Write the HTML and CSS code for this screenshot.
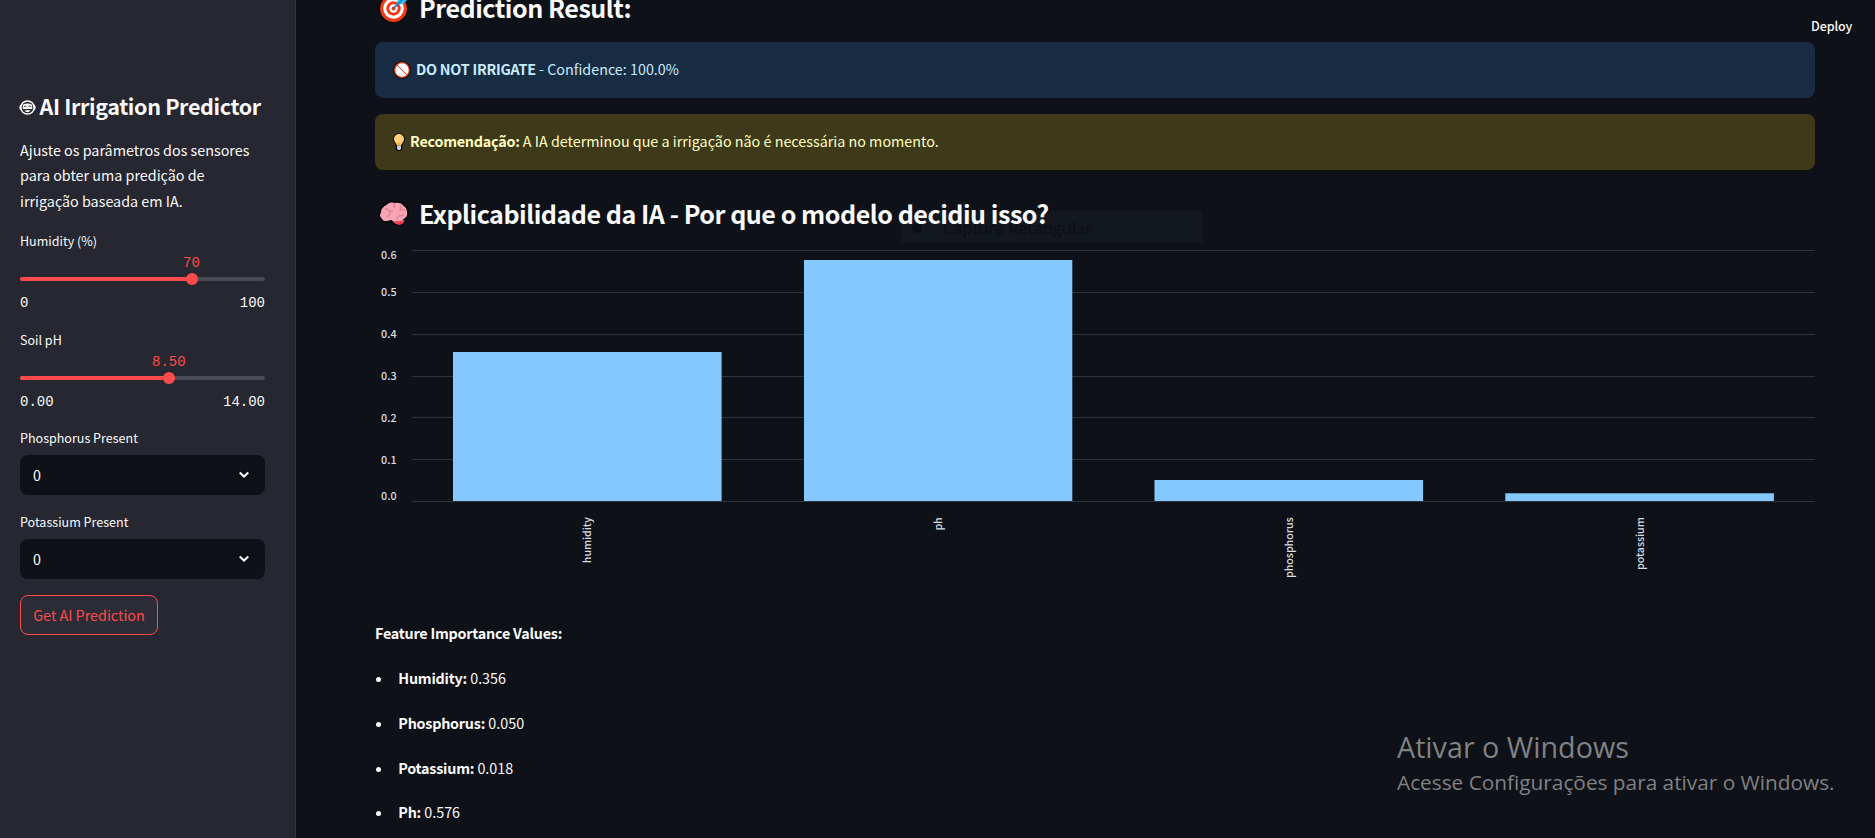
FILE: index.html
```html
<!DOCTYPE html>
<html lang="pt-BR">
<head>
<meta charset="utf-8">
<title>AI Irrigation Predictor</title>
<link rel="stylesheet" href="styles.css">
</head>
<body>
<div class="app">
  <aside class="sidebar">
    <h1 class="side-title">
      <svg class="bot" viewBox="0 0 17 15"><ellipse cx="8.500" cy="7.500" rx="8.200" ry="5" fill="#fff"/><ellipse cx="8.500" cy="7.500" rx="6.600" ry="6.600" fill="#262730" stroke="#fff" stroke-width="1.500"/><path d="M3.800 4.800Q8.500 2 13.200 4.800V9H3.800z" fill="#fff"/><path d="M4.800 7.200l1.400-1.500 1.400 1.500M9.400 7.200l1.400-1.500 1.400 1.500" fill="none" stroke="#333" stroke-width=".9"/><path d="M5.500 10.200h6q-1 2-3 2t-3-2z" fill="#fff"/></svg>
      <span>AI Irrigation Predictor</span>
    </h1>
    <p class="intro">Ajuste os parâmetros dos sensores<br>para obter uma predição de<br>irrigação baseada em IA.</p>

    <div class="slider">
      <div class="label">Humidity (%)</div>
      <div class="value-row"><span class="value" style="margin-left:163px">70</span></div>
      <div class="track"><div class="fill" style="width:171.5px"></div><div class="thumb"></div></div>
      <div class="range"><span>0</span><span>100</span></div>
    </div>
    <div class="slider">
      <div class="label">Soil pH</div>
      <div class="value-row"><span class="value" style="margin-left:132px">8.50</span></div>
      <div class="track"><div class="fill" style="width:148.75px"></div><div class="thumb"></div></div>
      <div class="range"><span>0.00</span><span>14.00</span></div>
    </div>
    <div class="field">
      <div class="label">Phosphorus Present</div>
      <div class="select"><span>0</span><svg class="chev" viewBox="0 0 12 8"><path d="M1.700 1.600L6 5.600l4.300-4" fill="none" stroke="#fafafa" stroke-width="2"/></svg></div>
    </div>
    <div class="field">
      <div class="label">Potassium Present</div>
      <div class="select"><span>0</span><svg class="chev" viewBox="0 0 12 8"><path d="M1.700 1.600L6 5.600l4.300-4" fill="none" stroke="#fafafa" stroke-width="2"/></svg></div>
    </div>
    <button class="predict">Get AI Prediction</button>
  </aside>

  <main class="main">
    <h2 class="heading result">
      <svg class="emoji" viewBox="0 0 32 32"><circle cx="15.500" cy="16.500" r="15" fill="#090a0c"/><circle cx="15.500" cy="16.500" r="13.500" fill="#f03a17"/><circle cx="15.500" cy="16.500" r="10.300" fill="#fff"/><circle cx="15.500" cy="16.500" r="7.200" fill="#f03a17"/><circle cx="15.500" cy="16.500" r="4.200" fill="#fff"/><circle cx="15.500" cy="16.500" r="2" fill="#f03a17"/><path d="M18 13l2-6 5-5 1 4 4 1-5 5z" fill="#28c4f5"/><path d="M15.500 16.500L25 7" stroke="#1675c9" stroke-width="1.500"/></svg>
      <span>Prediction Result:</span>
    </h2>
    <div class="alert info">
      <svg class="ban" viewBox="0 0 18 18"><circle cx="9" cy="9" r="9" fill="#090d12"/><circle cx="9" cy="9" r="7.300" fill="#fff" stroke="#ee4320" stroke-width="1.300"/><path d="M4 4l10 10" stroke="#ee4320" stroke-width="1"/></svg>
      <span class="msg"><b>DO NOT IRRIGATE</b> - Confidence: 100.0%</span>
    </div>
    <div class="alert warn">
      <svg class="bulb" viewBox="0 0 12 18"><path d="M6 0a6 6 0 0 0-6 6c0 3 2 4.500 2.500 6v4L4 18h4l1.500-2v-4C10 10.500 12 9 12 6a6 6 0 0 0-6-6z" fill="#101010"/><path d="M6 1a5 5 0 0 0-5 5c0 2.700 2 3.500 2.700 6h4.600C9 9.500 11 8.700 11 6a5 5 0 0 0-5-5z" fill="#ffd078"/><path d="M4.300 9.500h3.400V12H4.300z" fill="#ffb321"/><path d="M4 12.300h4v3.200L7 17H5l-1-1.500z" fill="#c6cbd0"/></svg>
      <span class="msg"><b>Recomendação:</b> A IA determinou que a irrigação não é necessária no momento.</span>
    </div>
    <h2 class="heading explain">
      <svg class="emoji brain" viewBox="0 0 32 28"><path d="M2 12C2 7 6 5 8 4c3-3 7-3 9-2 4-1 8 1 9 3 4 2 4 5 4 7 1 5-2 7-4 8 0 4-3 6-7 5-3 0-4-3-6-4-5 2-9 1-10-2-3-2-2-5-1-7z" fill="#f7a6b6" stroke="#08090b" stroke-width="2"/><path d="M15.500 21q7 1 11-1c0 4-4 5.300-7 4.500q-3-.6-4-3.500z" fill="#ef3e50"/><path d="M7 9q4 0 5 3 1-1 3-1M12 12q0 4-3 5M15 3q3 3 1 5M22 5q2 2 0 5 4-1 6 1M19 20q-1-3 2-4 4 0 5-2" fill="none" stroke="#e87e8f" stroke-width="1.300"/></svg>
      <span>Explicabilidade da IA - Por que o modelo decidiu isso?</span>
    </h2>
    <svg class="chart" viewBox="375 240 1440 360">
      <g class="grid"><path d="M412.500 250.500H1815M412.500 292.500H1815M412.500 334.500H1815M412.500 376.500H1815M412.500 417.500H1815M412.500 459.500H1815"/></g>
      <g class="bars">
        <rect x="453" y="352" width="268.600" height="149"/>
        <rect x="804" y="260" width="268.300" height="241"/>
        <rect x="1154.500" y="480" width="268.600" height="21"/>
        <rect x="1505.300" y="493.300" width="268.600" height="7.700"/>
      </g>
      <g class="grid"><path d="M412.500 501.500H1815"/></g>
      <g class="ylab">
        <text x="396.500" y="259">0.6</text><text x="396.500" y="296">0.5</text><text x="396.500" y="338">0.4</text><text x="396.500" y="380">0.3</text><text x="396.500" y="422">0.2</text><text x="396.500" y="464">0.1</text><text x="396.500" y="500">0.0</text>
      </g>
      <g class="xlab">
        <text transform="translate(590.500 517.300) rotate(-90)">humidity</text>
        <text transform="translate(941.500 517.300) rotate(-90)">ph</text>
        <text transform="translate(1292.500 517.300) rotate(-90)">phosphorus</text>
        <text transform="translate(1643.500 517.300) rotate(-90)">potassium</text>
      </g>
    </svg>
    <p class="feature"><b>Feature Importance Values:</b></p>
    <ul class="values">
      <li><b>Humidity:</b> 0.356</li>
      <li><b>Phosphorus:</b> 0.050</li>
      <li><b>Potassium:</b> 0.018</li>
      <li><b>Ph:</b> 0.576</li>
    </ul>
  </main>
</div>
<div class="deploy">Deploy</div>
<div class="snip"><span class="dot"></span><span>Captura Retangular</span></div>
<div class="activate"><div class="act-title">Ativar o Windows</div><div class="act-sub">Acesse Configurações para ativar o Windows.</div></div>
</body>
</html>
```
FILE: styles.css
```css
* { box-sizing: border-box; }
html { background: #0e1117; }
body {
  margin: 0; width: 1875px; height: 838px; overflow: hidden; position: relative;
  color: #fafafa;
  font: 14.33px/25.6px "Noto Sans CJK SC", "Noto Sans", sans-serif;
}
h1, h2, p, ul { margin: 0; padding: 0; }
b { font-weight: 700; letter-spacing: -.22px; }
.app { display: flex; height: 838px; }
.sidebar {
  width: 296px; flex: none; background: #262730; border-right: 1px solid #31333c;
  padding: 90px 30px 0 20px; display: flex; flex-direction: column;
}
.side-title { display: flex; gap: 3.5px; font-size: 21.5px; line-height: 32px; height: 32px; font-weight: 700; white-space: nowrap; margin-left: -1px; letter-spacing: -.35px; }
.bot { width: 17px; height: 15px; margin-top: 10px; flex: none; }
.intro { margin-top: 14.6px; line-height: 25.5px; height: 76.4px; white-space: nowrap; }
.label { font-size: 12.54px; line-height: 20px; height: 20px; white-space: nowrap; }
.intro + .slider { margin-top: 18px; margin-bottom: 17px; }
.slider { height: 82px; margin-bottom: 16px; width: 245px; font-size: 14px; }
.value-row { margin-top: .4px; height: 20px; line-height: 20px; color: #ff4b4b; }
.value, .range { font-family: "Liberation Mono", monospace; }
.track { margin-top: 5.6px; height: 4px; border-radius: 2px; background: #4a4b56; display: flex; align-items: center; }
.fill { height: 4px; background: #ff4b4b; border-radius: 2px 0 0 2px; }
.thumb { width: 12px; height: 12px; border-radius: 50%; background: #ff4b4b; margin-left: -6px; flex: none; }
.range { display: flex; justify-content: space-between; margin-top: 12px; line-height: 20px; }
.field { height: 67px; margin-bottom: 17px; width: 245px; }
.select { margin-top: 7px; height: 40px; border-radius: 8px; background: #0e1117; display: flex; align-items: center; justify-content: space-between; padding: 0 15px 0 13px; }
.chev { width: 12px; height: 8px; }
.predict { font: inherit; color: #ff4b4b; background: #2b2c36; border: 1px solid #ff4b4b; border-radius: 8px; width: 138px; height: 40px; padding: 0; margin-top: -1px; white-space: nowrap; }
.main { flex: 1; padding: 0 60px 0 79px; overflow: hidden; }
.heading { display: flex; font-size: 25.07px; line-height: 34px; height: 34px; font-weight: 700; letter-spacing: -.47px; white-space: nowrap; }
.heading.result { margin-top: -10px; }
.emoji { width: 32px; height: 32px; margin: 2px 9px 0 3px; flex: none; }
.brain { height: 28px; margin-top: 4px; }
.alert { height: 56px; border-radius: 8px; display: flex; align-items: center; padding-left: 18px; white-space: nowrap; }
.msg { margin-top: -2px; }
.info { margin-top: 18px; background: #182d43; color: #c7ebff; }
.warn { margin-top: 16px; background: #3e3918; color: #ffffc2; }
.ban { width: 18px; height: 18px; margin: -1px 5px 0 0; }
.bulb { width: 12px; height: 18px; margin: -1px 5px 0 0; }
.explain { margin-top: 26px; }
.chart { display: block; width: 1440px; height: 360px; margin-top: 10px; }
.grid path { stroke: #31333c; stroke-width: 1; fill: none; }
.bars rect { fill: #83c9ff; }
.ylab, .xlab { fill: #dcdde0; font-size: 10.74px; font-weight: 500; text-anchor: end; }
.xlab { letter-spacing: -.08px; }
.feature { margin-top: 20px; height: 45px; }
.values { list-style: none; }
.values li { height: 44.8px; display: flex; white-space: pre; }
.values li::before { content: ""; width: 5px; height: 5px; border-radius: 50%; background: #fafafa; margin: 12px 17.3px 0 1px; }
.deploy { position: absolute; left: 1811px; top: 16px; font-size: 12.54px; line-height: 20px; font-weight: 500; letter-spacing: -.1px; }
.snip { position: absolute; z-index: -1; left: 901px; top: 211px; width: 302px; height: 31px; background: rgba(38, 48, 60, .2); display: flex; align-items: center; gap: 21px; padding: 3px 0 0 11px; color: #0b0e12; font: 16.4px/28px "Open Sans", sans-serif; }
.dot { width: 10px; height: 10px; border-radius: 50%; background: #0b0e12; }
.activate { position: absolute; left: 1397px; top: 727px; color: #808183; font-family: "Open Sans", "Noto Sans", sans-serif; white-space: nowrap; }
.act-title { font-size: 28.7px; line-height: 40px; }
.act-sub { font-size: 20.8px; line-height: 31px; }
```
